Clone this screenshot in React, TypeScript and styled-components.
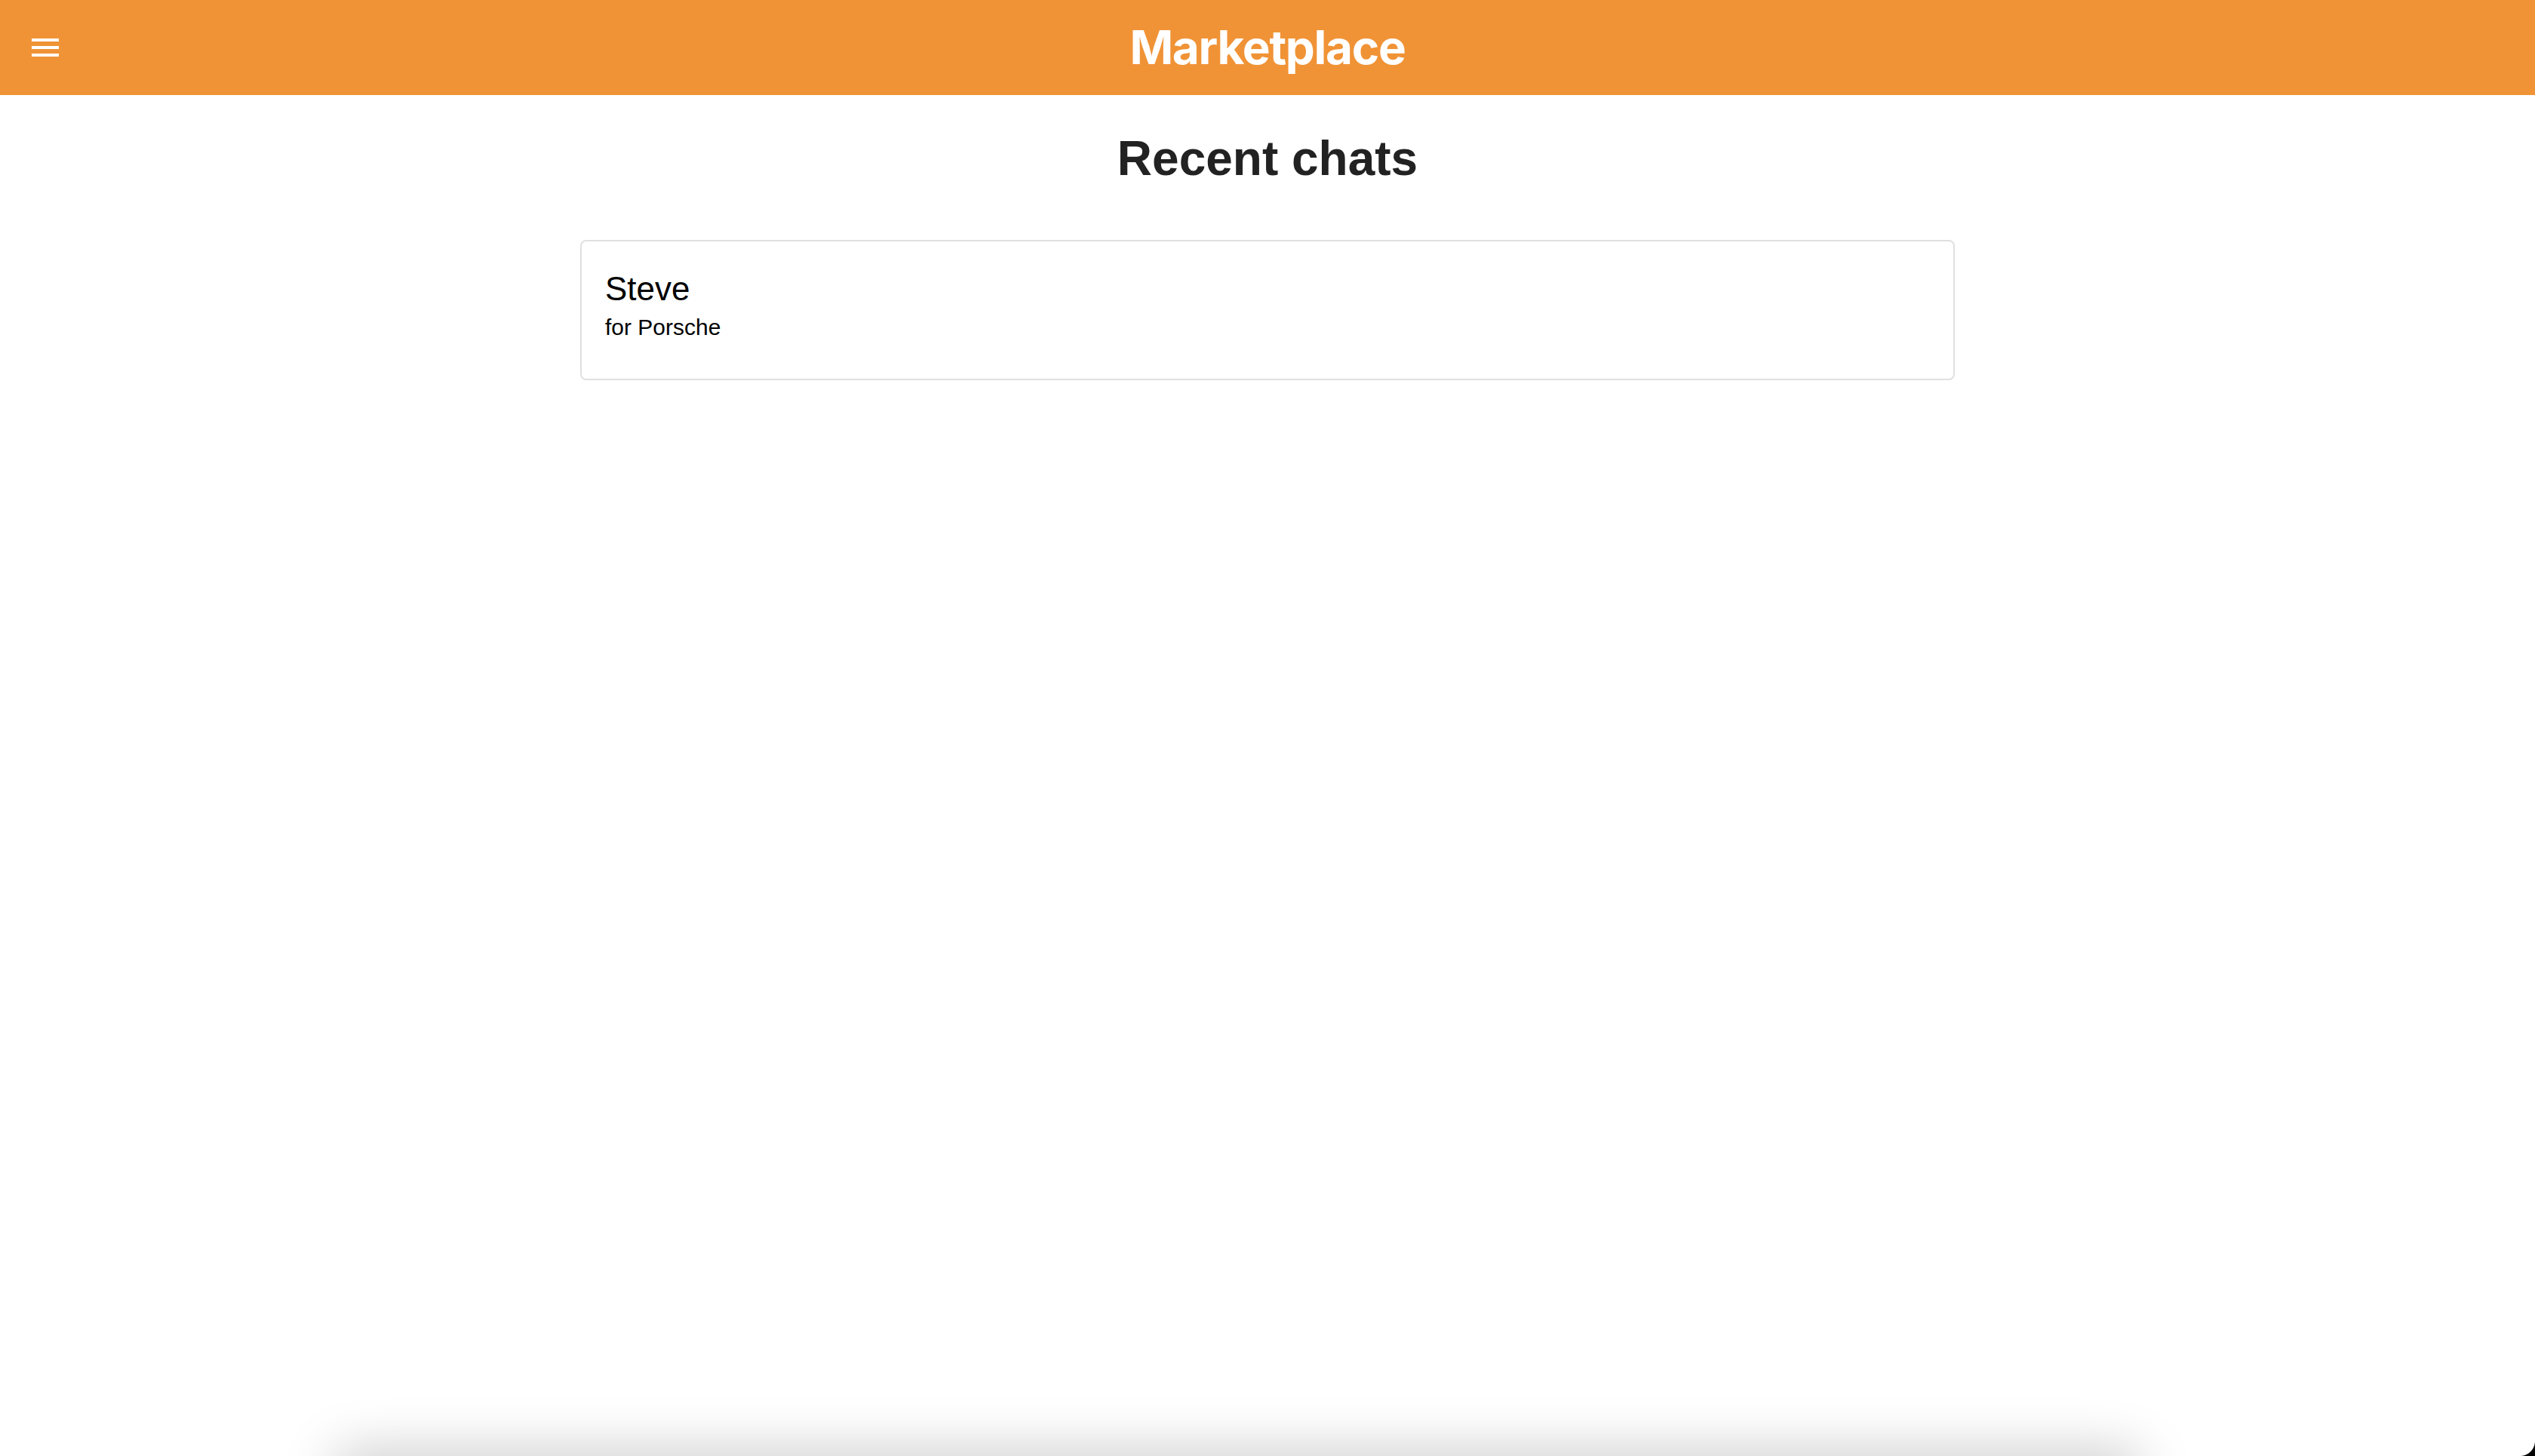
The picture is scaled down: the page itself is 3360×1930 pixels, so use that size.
import React from "react";
import styled, { createGlobalStyle } from "styled-components";

const Global = createGlobalStyle`
  html, body {
    margin: 0;
    padding: 0;
    background: #ffffff;
  }
  body {
    font-family: "Liberation Sans", Arial, sans-serif;
    overflow: hidden;
  }
`;

const Page = styled.div`
  position: relative;
  width: 100vw;
  height: 100vh;
  display: flex;
  flex-direction: column;
  background: #ffffff;
  overflow: hidden;
`;

const Toolbar = styled.header`
  height: 126px;
  flex: 0 0 126px;
  background: #f09336;
  display: grid;
  grid-template-columns: 120px 1fr 120px;
  align-items: center;
  padding: 0 36px;
  box-sizing: border-box;
`;

const MenuButton = styled.button`
  width: 48px;
  height: 48px;
  padding: 0;
  border: none;
  background: transparent;
  display: flex;
  align-items: center;
  justify-content: center;
  cursor: pointer;
`;

const ToolbarTitle = styled.h1`
  margin: 0;
  text-align: center;
  font-family: Inter, "Noto Sans", sans-serif;
  font-weight: 700;
  font-size: 62px;
  line-height: 62px;
  color: #ffffff;
  letter-spacing: -1.3px;
`;

const Content = styled.main`
  flex: 1;
  display: flex;
  flex-direction: column;
  align-items: stretch;
`;

const Heading = styled.h2`
  margin: 46px 0 0;
  text-align: center;
  font-family: "Liberation Sans", Arial, sans-serif;
  font-weight: 700;
  font-size: 64px;
  line-height: 76px;
  color: #222222;
`;

const ChatList = styled.ul`
  list-style: none;
  margin: 70px auto 0;
  padding: 0;
  width: 1822px;
`;

const ChatCard = styled.li`
  border: 2px solid #e0e0e0;
  border-radius: 8px;
  padding: 37px 31px 50px;
  background: #ffffff;
  cursor: pointer;
`;

const ChatName = styled.div`
  font-size: 44px;
  line-height: 52px;
  color: #000000;
`;

const ChatSubject = styled.div`
  margin-top: 7px;
  font-size: 30px;
  line-height: 36px;
  color: #000000;
`;

const BottomSheetShadow = styled.div`
  position: absolute;
  left: 440px;
  width: 2400px;
  bottom: -60px;
  height: 60px;
  background: #ffffff;
  border-radius: 40px;
  box-shadow: 0 -6px 70px rgba(0, 0, 0, 0.22);
`;

const WindowCorner = styled.div`
  position: absolute;
  right: 0;
  bottom: 0;
  width: 20px;
  height: 20px;
  background: radial-gradient(circle at 0 0, transparent 19.5px, #000 20.5px);
`;

function MenuIcon() {
  return (
    <svg width="48" height="48" viewBox="0 0 24 24" fill="#ffffff">
      <path d="M3 18h18v-2H3v2zm0-5h18v-2H3v2zm0-7v2h18V6H3z" />
    </svg>
  );
}

export default function App() {
  return (
    <>
      <Global />
      <Page>
        <Toolbar>
          <MenuButton aria-label="menu">
            <MenuIcon />
          </MenuButton>
          <ToolbarTitle>Marketplace</ToolbarTitle>
          <span />
        </Toolbar>
        <Content>
          <Heading>Recent chats</Heading>
          <ChatList>
            <ChatCard>
              <ChatName>Steve</ChatName>
              <ChatSubject>for Porsche</ChatSubject>
            </ChatCard>
          </ChatList>
        </Content>
        <BottomSheetShadow />
        <WindowCorner />
      </Page>
    </>
  );
}
